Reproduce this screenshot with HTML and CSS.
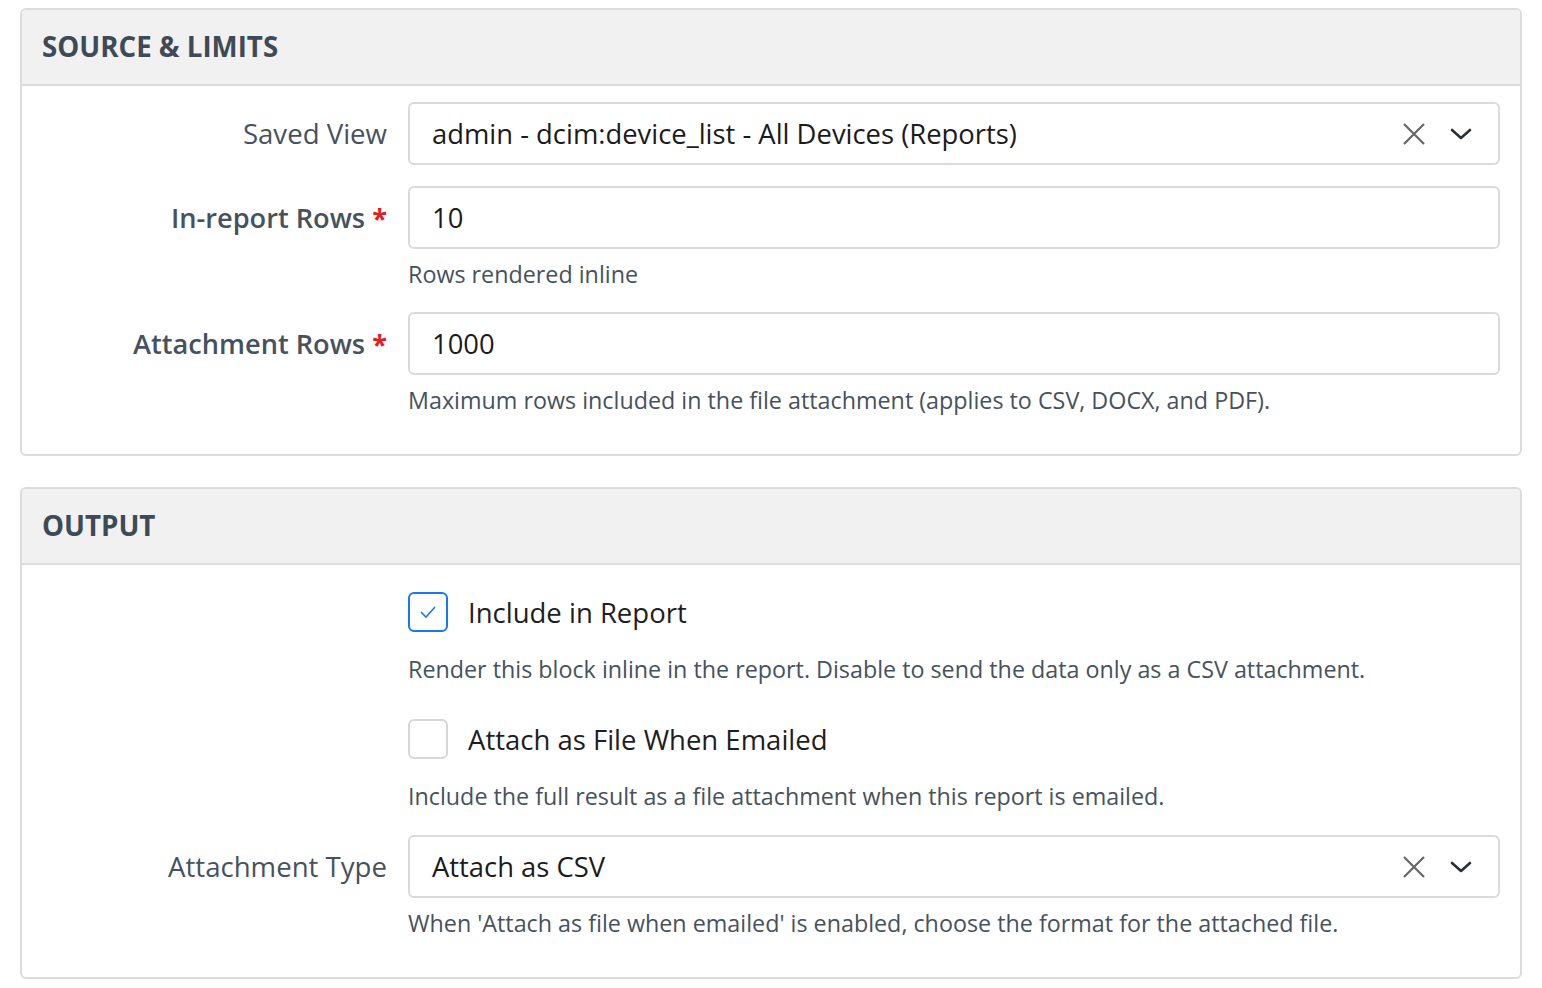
FILE: index.html
```html
<!DOCTYPE html>
<html lang="en">
<head>
    <meta charset="UTF-8">
    <meta name="viewport" content="width=device-width, initial-scale=1.0">
    <title>Report Block Settings</title>
    <link rel="stylesheet" href="styles.css">
</head>
<body>
    <div class="panel">
        <div class="panel-heading">Source &amp; Limits</div>
        <div class="panel-body">
            <div class="form-group">
                <label class="control-label">Saved View</label>
                <div class="control">
                    <div class="select">
                        <span class="select-value">admin - dcim:device_list - All Devices (Reports)</span>
                        <span class="select-clear">
                            <svg width="24" height="24" viewBox="0 0 24 24"><path d="M2 2 L22 22 M22 2 L2 22" stroke="#666" stroke-width="2.2" fill="none"/></svg>
                        </span>
                        <span class="select-arrow">
                            <svg width="22" height="14" viewBox="0 0 22 14"><path d="M2 3 L11 11 L20 3" stroke="#2a2f34" stroke-width="2.6" fill="none" stroke-linecap="round" stroke-linejoin="round"/></svg>
                        </span>
                    </div>
                </div>
            </div>
            <div class="form-group">
                <label class="control-label required">In-report Rows <span class="star">*</span></label>
                <div class="control">
                    <div class="input">10</div>
                    <div class="help">Rows rendered inline</div>
                </div>
            </div>
            <div class="form-group">
                <label class="control-label required">Attachment Rows <span class="star">*</span></label>
                <div class="control">
                    <div class="input">1000</div>
                    <div class="help">Maximum rows included in the file attachment (applies to CSV, DOCX, and PDF).</div>
                </div>
            </div>
        </div>
    </div>

    <div class="panel">
        <div class="panel-heading">Output</div>
        <div class="panel-body">
            <div class="form-group check-group">
                <div class="control-label"></div>
                <div class="control">
                    <div class="check-row">
                        <span class="checkbox checked">
                            <svg width="22" height="22" viewBox="0 0 22 22"><path d="M4 11 L9 16 L18 6" stroke="#1877f2" stroke-width="1.6" fill="none"/></svg>
                        </span>
                        <span class="check-label">Include in Report</span>
                    </div>
                    <div class="help check-help">Render this block inline in the report. Disable to send the data only as a CSV attachment.</div>
                </div>
            </div>
            <div class="form-group check-group">
                <div class="control-label"></div>
                <div class="control">
                    <div class="check-row">
                        <span class="checkbox"></span>
                        <span class="check-label">Attach as File When Emailed</span>
                    </div>
                    <div class="help check-help">Include the full result as a file attachment when this report is emailed.</div>
                </div>
            </div>
            <div class="form-group">
                <label class="control-label">Attachment Type</label>
                <div class="control">
                    <div class="select">
                        <span class="select-value">Attach as CSV</span>
                        <span class="select-clear">
                            <svg width="24" height="24" viewBox="0 0 24 24"><path d="M2 2 L22 22 M22 2 L2 22" stroke="#666" stroke-width="2.2" fill="none"/></svg>
                        </span>
                        <span class="select-arrow">
                            <svg width="22" height="14" viewBox="0 0 22 14"><path d="M2 3 L11 11 L20 3" stroke="#2a2f34" stroke-width="2.6" fill="none" stroke-linecap="round" stroke-linejoin="round"/></svg>
                        </span>
                    </div>
                    <div class="help">When 'Attach as file when emailed' is enabled, choose the format for the attached file.</div>
                </div>
            </div>
        </div>
    </div>
</body>
</html>
```

FILE: styles.css
```css
body {
    margin: 0;
    padding: 8px 20px 0 20px;
    font-family: "Open Sans", "Noto Sans", Arial, sans-serif;
    background-color: #fff;
    color: #444f59;
}

.panel {
    border: 2px solid #dcdcdc;
    border-radius: 6px;
    margin-bottom: 31px;
    overflow: hidden;
}

.panel-heading {
    background-color: #f1f1f1;
    border-bottom: 2px solid #dcdcdc;
    height: 74px;
    line-height: 72px;
    padding-left: 20px;
    font-size: 27.7px;
    font-weight: 700;
    text-transform: uppercase;
    color: #3e4a55;
}

.panel-body {
    padding: 16px 20px 16px 0;
}

.form-group {
    display: grid;
    grid-template-columns: 365px 1fr;
    column-gap: 21px;
    margin-bottom: 21px;
}

.control-label {
    text-align: right;
    font-size: 27.6px;
    line-height: 63px;
    color: #46525d;
}

.control-label.required {
    font-weight: 600;
    font-size: 27.2px;
}

.star {
    color: #e0201c;
    font-weight: 700;
}

.input,
.select {
    height: 59px;
    border: 2px solid #dadada;
    border-radius: 6px;
    padding: 0 22px;
    font-size: 27.4px;
    line-height: 59px;
    color: #1b1b1b;
}

.select {
    display: flex;
    align-items: center;
    padding-right: 26px;
}

.select-value {
    flex: 1;
}

.select-clear {
    display: flex;
    margin-right: 24px;
}

.select-arrow {
    display: flex;
}

.help {
    margin-top: 8px;
    font-size: 23.3px;
    line-height: 34px;
    color: #46525d;
}

.check-group {
    padding-top: 11px;
    margin-bottom: 22px;
}

.check-row {
    display: flex;
    align-items: center;
    height: 40px;
}

.checkbox {
    box-sizing: border-box;
    width: 40px;
    height: 40px;
    border: 2px solid #d7d7d7;
    border-radius: 6px;
    display: flex;
    align-items: center;
    justify-content: center;
    margin-right: 20px;
}

.checkbox.checked {
    border-color: #1877f2;
}

.check-label {
    font-size: 27.5px;
    color: #1e1e1e;
}

.check-help {
    margin-top: 20px;
}
```
